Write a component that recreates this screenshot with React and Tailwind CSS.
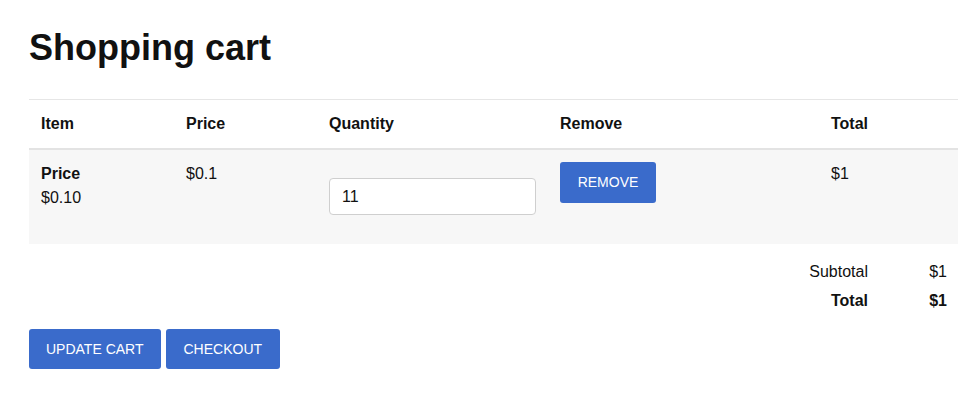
export default function App() {
    const rows = [{ id: 1, name: "Price", unit: "$0.10", price: "$0.1", qty: 11, total: "$1" }]

    return (
        <div className="min-h-[408px] bg-white pl-[29px] pr-[17px] pt-[26px] text-[16px] text-[#111] font-['Liberation_Sans',Arial,sans-serif]">
            <h1 className="text-[36px] font-bold leading-[44px] mb-[29px]">Shopping cart</h1>

            <table className="w-[929px] border-collapse text-left">
                <thead>
                    <tr className="border-t border-[#e6e6e6] border-b-2 border-b-[#e3e3e3]">
                        <th className="w-[145px] px-3 pt-[12px] pb-[12px] h-[48px] font-bold align-middle">Item</th>
                        <th className="w-[143px] px-3 font-bold align-middle">Price</th>
                        <th className="w-[231px] px-3 font-bold align-middle">Quantity</th>
                        <th className="w-[271px] px-3 font-bold align-middle">Remove</th>
                        <th className="px-3 font-bold align-middle">Total</th>
                    </tr>
                </thead>
                <tbody>
                    {rows.map((r) => (
                        <tr key={r.id} className="bg-[#f7f7f7] align-top">
                            <td className="px-3 py-3 leading-6">
                                <div className="font-bold">{r.name}</div>
                                <div>{r.unit}</div>
                            </td>
                            <td className="px-3 py-3 leading-6">{r.price}</td>
                            <td className="px-3 pt-3 pb-[13px]">
                                <input
                                    defaultValue={r.qty}
                                    className="my-4 block w-[207px] h-[37px] rounded-[4px] border border-[#cfcfcf] bg-white px-[12px] text-[16px] outline-none"
                                />
                            </td>
                            <td className="px-3 pt-[12px]">
                                <button className="h-[41px] px-[17px] w-[96px] rounded-[3px] bg-[#3a6bcb] text-white text-[14px] uppercase">
                                    Remove
                                </button>
                            </td>
                            <td className="px-3 py-3 leading-6">{r.total}</td>
                        </tr>
                    ))}
                </tbody>
            </table>

            <div className="w-[929px] mt-[13px] flex flex-col items-end leading-[29px]">
                <div className="flex">
                    <span className="w-[120px] text-right pr-3">Subtotal</span>
                    <span className="w-[78px] text-right pr-[11px]">$1</span>
                </div>
                <div className="flex font-bold">
                    <span className="w-[120px] text-right pr-3">Total</span>
                    <span className="w-[78px] text-right pr-[11px]">$1</span>
                </div>
            </div>

            <div className="mt-[14px] flex gap-[5px]">
                <button className="h-[40px] px-[17px] rounded-[3px] bg-[#3a6bcb] text-white text-[14px] uppercase">
                    Update cart
                </button>
                <button className="h-[40px] px-[18px] rounded-[3px] bg-[#3a6bcb] text-white text-[14px] uppercase">
                    Checkout
                </button>
            </div>
        </div>
    )
}
